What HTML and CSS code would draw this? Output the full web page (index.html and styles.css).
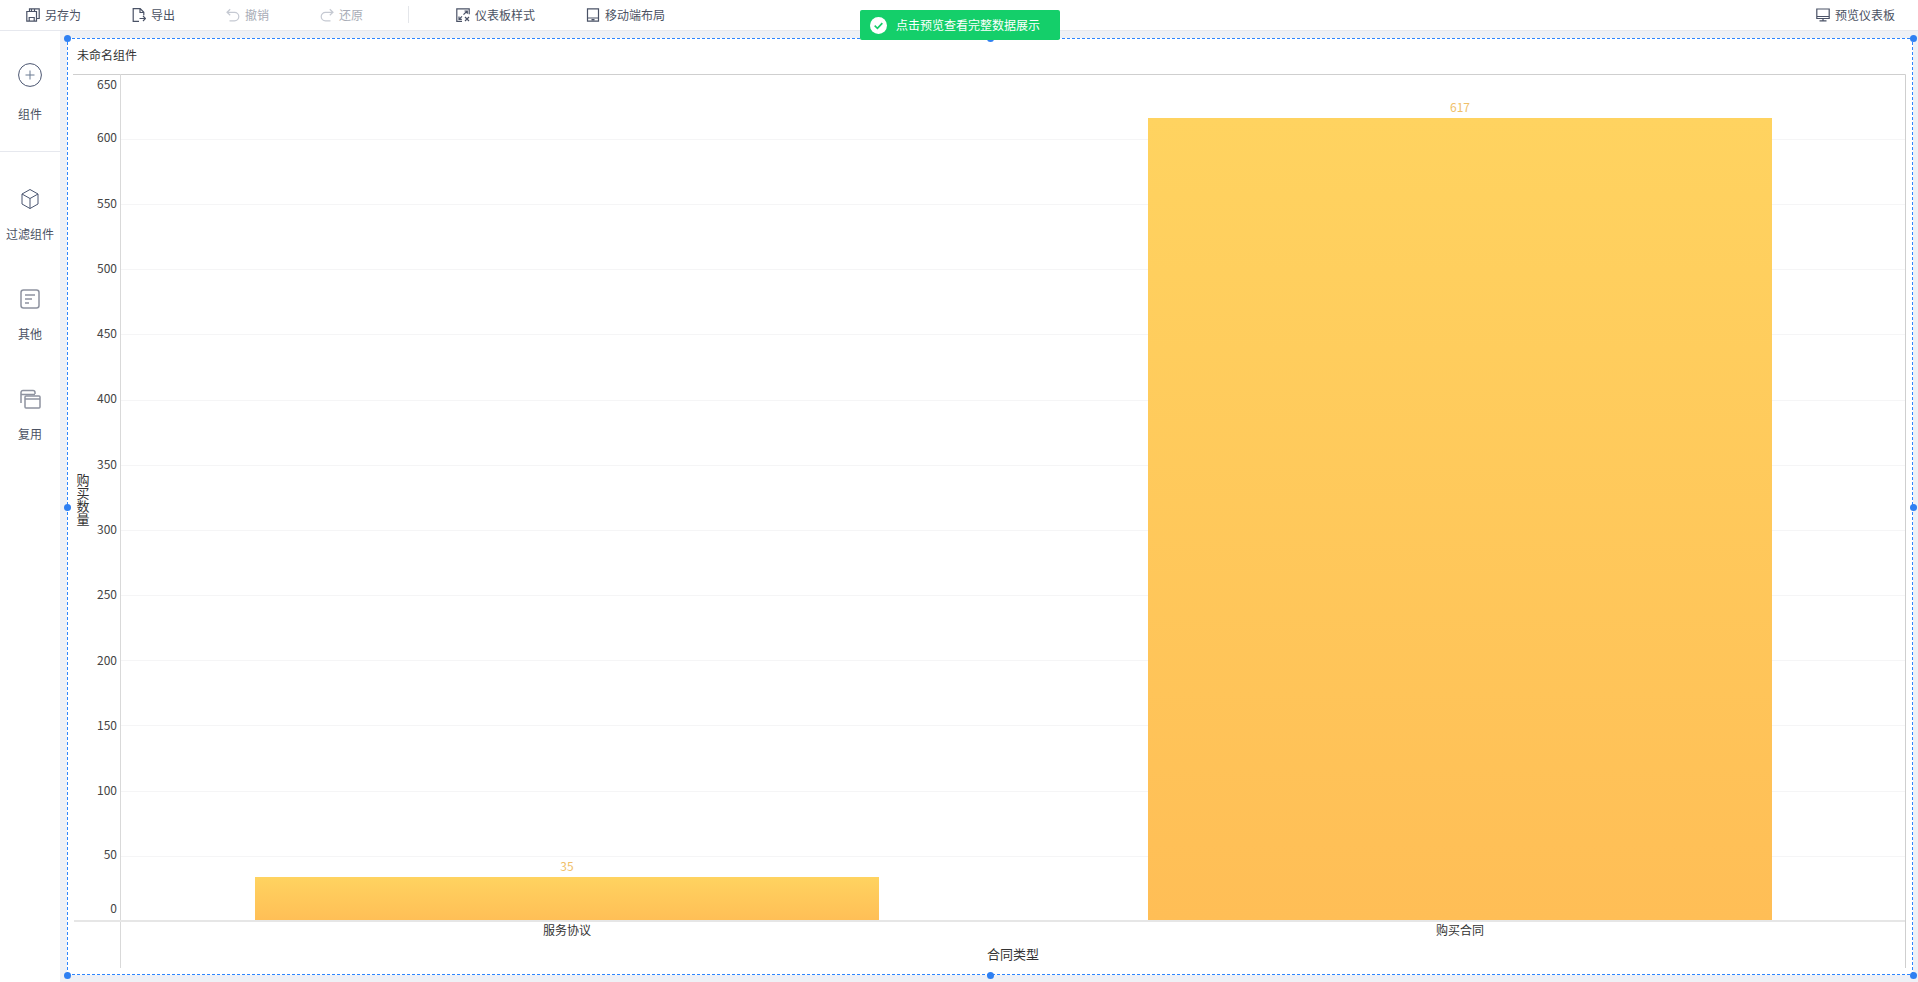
FILE: index.html
```html
<!DOCTYPE html>
<html lang="zh-CN">
<head>
<meta charset="utf-8">
<title>仪表板</title>
<link rel="stylesheet" href="styles.css">
</head>
<body>
<header class="toolbar">
  <div class="tool"><svg class="ti" viewBox="0 0 14 14"><path d="M3.500 3.500V.8h9.700v9.700h-2.700M.8 3.500h9.700v9.700H.8zM3.200 13V9.500h5V13M5.500.8v2.600M8.500.8v2.600"/></svg><span>另存为</span></div>
  <div class="tool"><svg class="ti" viewBox="0 0 14 14"><path d="M7 13.300H1.200V.7h7l3.600 3.600v3M8 .9v3.600h3.600M7.500 10.500h6M11 8l2.500 2.500L11 13"/></svg><span>导出</span></div>
  <div class="tool off"><svg class="ti" viewBox="0 0 14 14"><path d="M4.200 1.200 1 4.300l3.200 3M1.200 4.300h7.300a4.300 4.300 0 0 1 0 8.600H3.500"/></svg><span>撤销</span></div>
  <div class="tool off"><svg class="ti" viewBox="0 0 14 14"><path d="M9.800 1.200 13 4.300l-3.200 3M12.800 4.300H5.500a4.300 4.300 0 0 0 0 8.600h5"/></svg><span>还原</span></div>
  <div class="divider"></div>
  <div class="tool"><svg class="ti" viewBox="0 0 14 14"><path d="M6 13.300H.8V.8h12.400v5.400M8.500 3h2.800v2.800M11.200 3 7.500 6.700M3 8.500v2.800h2.800M3 11.300l3-3"/><path d="M9 9l4 4M13 9l-4 4"/></svg><span>仪表板样式</span></div>
  <div class="tool"><svg class="ti" viewBox="0 0 14 14"><path d="M1.500.8h11v12.400h-11zM1.500 10h11M5.500 11.700h3"/></svg><span>移动端布局</span></div>
  <div class="tool end"><svg class="ti" viewBox="0 0 14 14"><path d="M.8 1h12.400v9.500H.8zM.8 8.500h12.400M3.500 12.900h7M7 10.500v2.400"/></svg><span>预览仪表板</span></div>
</header>

<div class="toast">
  <svg class="toast-icon" viewBox="0 0 16 16"><circle cx="8" cy="8" r="8" fill="#fff"/><path d="M4.400 8.200 7 10.600l4.600-4.800" fill="none" stroke="#14cf6a" stroke-width="1.600"/></svg>
  <span>点击预览查看完整数据展示</span>
</div>

<div class="main">
  <aside class="side">
    <div class="side-top">
      <div class="side-item first">
        <svg class="si" viewBox="0 0 24 24"><circle cx="12" cy="12" r="11.400"/><path class="accent" d="M12 7.500v9M7.500 12h9"/></svg>
        <span>组件</span>
      </div>
    </div>
    <div class="side-list">
      <div class="side-item">
        <svg class="si" viewBox="0 0 24 24"><path d="M12 2.500 20 7v10l-8 4.500L4 17V7zM4 7l8 4.500L20 7M12 11.500v10"/></svg>
        <span>过滤组件</span>
      </div>
      <div class="side-item">
        <svg class="si grey" viewBox="0 0 24 24"><rect x="3" y="3" width="18" height="18" rx="2.500"/><path d="M7 8h10M7 12h7M7 16h4"/></svg>
        <span>其他</span>
      </div>
      <div class="side-item">
        <svg class="si grey" viewBox="0 0 24 24"><path d="M3 16V5.500A2 2 0 0 1 5 3.500h10a2 2 0 0 1 2 2v1.500M3 7.500h14"/><rect x="7" y="9" width="15" height="12" rx="1"/><path d="M7 12h15"/></svg>
        <span>复用</span>
      </div>
    </div>
  </aside>

  <main class="canvas">
    <section class="widget">
      <i class="handle tl"></i><i class="handle tc"></i><i class="handle tr"></i>
      <i class="handle ml"></i><i class="handle mr"></i>
      <i class="handle bl"></i><i class="handle bc"></i><i class="handle br"></i>
      <h2 class="title">未命名组件</h2>
      <svg class="chart" viewBox="68 74 1844 900" width="1844" height="900">
        <defs>
          <linearGradient id="barA" x1="0" y1="0" x2="0" y2="1"><stop offset="0" stop-color="#ffd360"/><stop offset="1" stop-color="#ffbe56"/></linearGradient>
        </defs>
        <g class="grid">
          <path d="M121 139.500H1905M121 204.500H1905M121 269.500H1905M121 334.500H1905M121 400.500H1905M121 465.500H1905M121 530.500H1905M121 595.500H1905M121 660.500H1905M121 725.500H1905M121 791.500H1905M121 856.500H1905"/>
        </g>
        <path class="frame" d="M73 74.500H1905.500V968"/>
        <path class="yaxis" d="M120.500 74V968"/>
        <rect x="255" y="877" width="624" height="44.500" fill="url(#barA)"/>
        <rect x="1148" y="118" width="624" height="803.500" fill="url(#barA)"/>
        <path class="xaxis" d="M74 921H1905"/>
        <g class="ylab">
          <text x="117" y="89">650</text><text x="117" y="142">600</text><text x="117" y="208">550</text><text x="117" y="273">500</text><text x="117" y="338">450</text><text x="117" y="403">400</text><text x="117" y="469">350</text><text x="117" y="534">300</text><text x="117" y="599">250</text><text x="117" y="665">200</text><text x="117" y="730">150</text><text x="117" y="795">100</text><text x="117" y="859">50</text><text x="117" y="913">0</text>
        </g>
        <g class="vals">
          <text x="567" y="871">35</text><text x="1460" y="112">617</text>
        </g>
        <g class="xlab">
          <text x="567" y="935">服务协议</text><text x="1460" y="935">购买合同</text>
        </g>
        <text class="xname" x="1013" y="959">合同类型</text>
        <text class="yname" x="83" y="474">购买数量</text>
      </svg>
    </section>
  </main>
</div>
</body>
</html>
```
FILE: styles.css
```css
* { box-sizing: border-box; }
html, body { margin: 0; height: 100%; }
body {
  display: flex;
  flex-direction: column;
  height: 982px;
  overflow: hidden;
  background: #eff1f6;
  color: #4b5263;
  font: 12px/16px "Noto Sans CJK SC", "Microsoft YaHei", sans-serif;
}
.toolbar {
  display: flex;
  align-items: center;
  gap: 51px;
  flex: 0 0 31px;
  padding: 0 23px 1px 26px;
  background: #fff;
  border-bottom: 1px solid #e6e8ee;
}
.tool { display: flex; align-items: center; gap: 5px; }
.tool.off { color: #a8acb6; }
.tool.end { margin-left: auto; }
.ti { width: 14px; height: 14px; fill: none; stroke: #4a5266; stroke-width: 1.2; }
.off .ti { stroke: #c5c9d2; }
.divider { width: 1px; height: 17px; margin: 0 -4px 0 -6px; background: #e4e6ea; }

.toast {
  position: fixed;
  left: 860px;
  top: 10px;
  z-index: 5;
  display: flex;
  align-items: center;
  gap: 9px;
  width: 200px;
  height: 30px;
  padding-left: 10px;
  border-radius: 2px;
  background: #14cf6a;
  color: #fff;
}
.toast-icon { width: 17px; height: 17px; }

.main { display: flex; flex: 1; min-height: 0; }
.side { flex: 0 0 60px; background: #fff; }
.side-top { height: 121px; border-bottom: 1px solid #e6e8ee; padding-top: 32px; }
.side-list { padding-top: 35px; }
.side-item { display: flex; flex-direction: column; align-items: center; height: 100px; white-space: nowrap; gap: 15px; }
.side-item.first { height: auto; gap: 19px; }
.si { width: 24px; height: 24px; flex: none; fill: none; stroke: #4a5570; stroke-width: 1; }
.si.grey { stroke: #8e93a0; stroke-width: 1.5; }
.si .accent { stroke: #6b7a92; }

.canvas { flex: 1; min-width: 0; padding: 7px 5px 7px 7px; }
.widget {
  position: relative;
  display: flex;
  flex-direction: column;
  height: 100%;
  padding: 1px;
  background-color: #fff;
  background-image:
    repeating-linear-gradient(90deg, #2e86ff 0 3px, transparent 3px 5px),
    repeating-linear-gradient(90deg, #2e86ff 0 3px, transparent 3px 5px),
    repeating-linear-gradient(0deg, #2e86ff 0 3px, transparent 3px 5px),
    repeating-linear-gradient(0deg, #2e86ff 0 3px, transparent 3px 5px);
  background-size: 100% 1px, 100% 1px, 1px 100%, 1px 100%;
  background-position: 0 0, 0 100%, 0 0, 100% 0;
  background-repeat: no-repeat;
}
.title {
  flex: 0 0 35px;
  margin: 0;
  padding: 8px 0 0 9px;
  font-size: 12px;
  font-weight: 400;
  line-height: 16px;
  color: #333;
}
.chart { display: block; flex: none; }
.chart text { font-family: "Noto Sans CJK SC", "Microsoft YaHei", sans-serif; }
.grid path { fill: none; stroke: #f5f5f6; stroke-width: 1; }
.frame { fill: none; stroke: #cfcfcf; stroke-width: 1; }
.yaxis { fill: none; stroke: #d9d9d9; stroke-width: 1; }
.xaxis { fill: none; stroke: #e6e6e6; stroke-width: 2; }
.ylab text { font-size: 12px; fill: #444; text-anchor: end; }
.vals text { font-size: 12px; fill: #f0bf6a; text-anchor: middle; }
.xlab text { font-size: 12px; fill: #333; text-anchor: middle; }
.xname { font-size: 13px; fill: #333; text-anchor: middle; }
.yname { font-size: 13px; fill: #333; writing-mode: vertical-rl; }

.handle { position: absolute; z-index: 2; width: 7px; height: 7px; margin: -3px 0 0 -3px; border-radius: 50%; background: #2f80f2; }
.tl { left: 0; top: 0; }
.tc { left: 50%; top: 0; }
.tr { left: 100%; top: 0; }
.ml { left: 0; top: 50%; }
.mr { left: 100%; top: 50%; }
.bl { left: 0; top: 100%; }
.bc { left: 50%; top: 100%; }
.br { left: 100%; top: 100%; }
```
